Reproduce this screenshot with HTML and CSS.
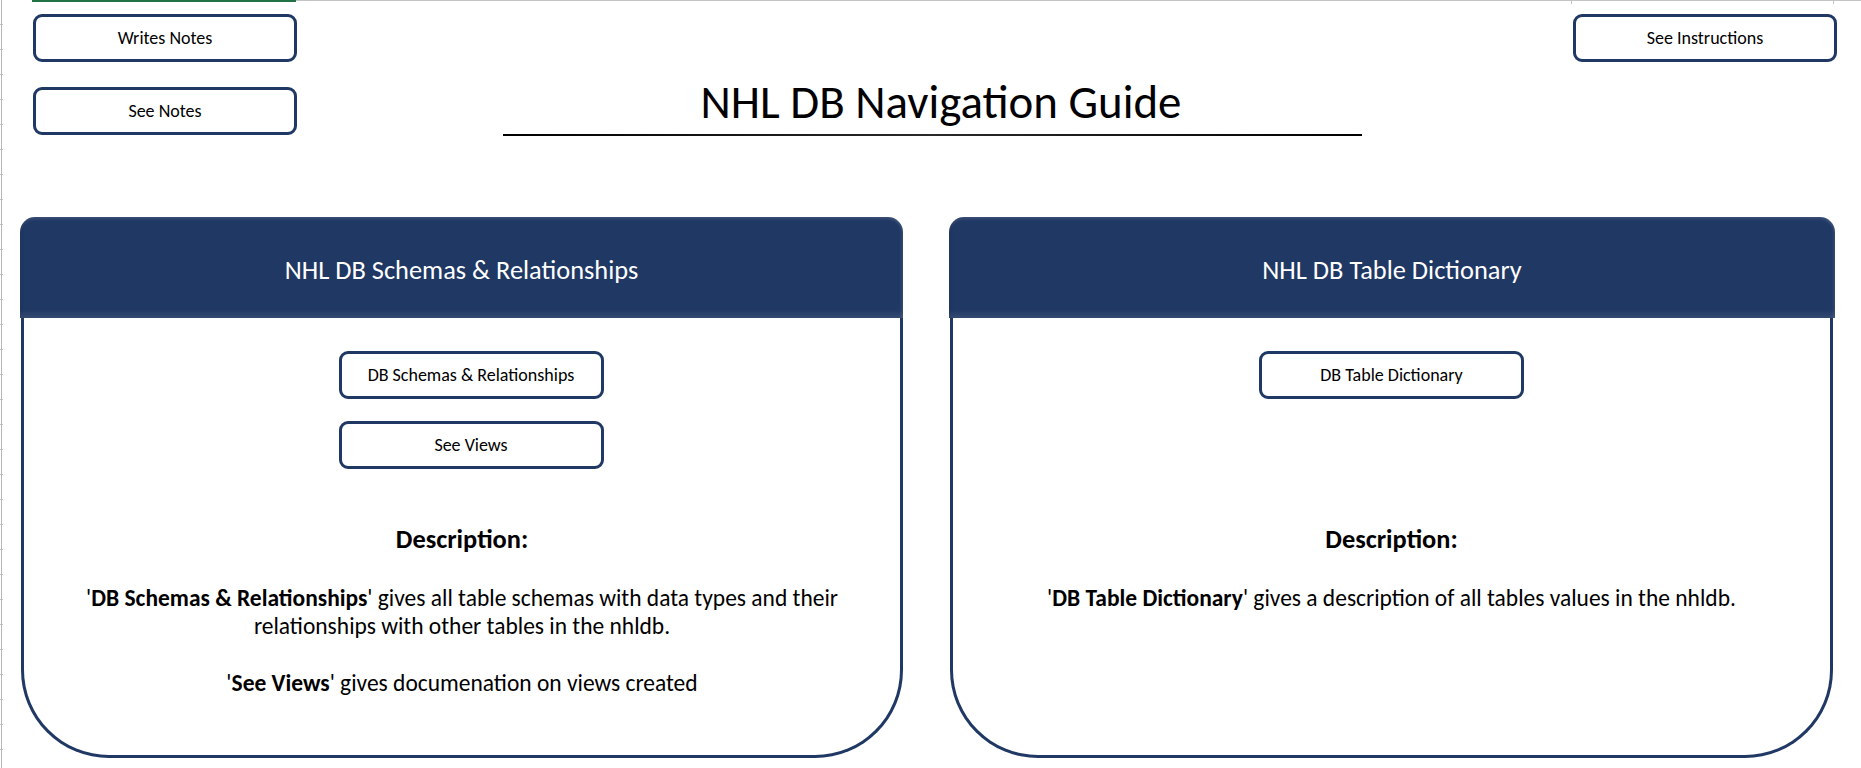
FILE: index.html
```html
<!DOCTYPE html>
<html lang="en">
<head>
<meta charset="utf-8">
<title>NHL DB Navigation Guide</title>
<link rel="stylesheet" href="styles.css">
</head>
<body>
<div class="sheet">
  <header class="top">
    <div class="nav nav-left">
      <button class="btn">Writes Notes</button>
      <button class="btn">See Notes</button>
    </div>
    <div class="title-wrap">
      <h1 class="title">NHL DB Navigation Guide</h1>
      <div class="title-rule"></div>
    </div>
    <div class="nav nav-right">
      <button class="btn">See Instructions</button>
    </div>
  </header>

  <main class="cards">
    <section class="card">
      <div class="card-head">NHL DB Schemas &amp; Relationships</div>
      <div class="card-body">
        <div class="actions actions-shift">
          <button class="btn btn-card">DB Schemas &amp; Relationships</button>
          <button class="btn btn-card">See Views</button>
        </div>
        <div class="desc">
          <h2 class="desc-title">Description:</h2>
          <p class="desc-text"><span class="line">'<b>DB Schemas &amp; Relationships</b>' gives all table schemas with data types and their</span><br><span class="line">relationships with other tables in the nhldb.</span></p>
          <p class="desc-text desc-gap">'<b>See Views</b>' gives documenation on views created</p>
        </div>
      </div>
    </section>

    <section class="card card-right">
      <div class="card-head">NHL DB Table Dictionary</div>
      <div class="card-body">
        <div class="actions">
          <button class="btn btn-card">DB Table Dictionary</button>
        </div>
        <div class="desc">
          <h2 class="desc-title">Description:</h2>
          <p class="desc-text">'<b>DB Table Dictionary</b>' gives a description of all tables values in the nhldb.</p>
        </div>
      </div>
    </section>
  </main>
</div>
</body>
</html>
```
FILE: styles.css
```css
html, body {
  margin: 0;
  padding: 0;
  background: #ffffff;
}

body {
  font-family: Calibri, Carlito, Lato, sans-serif;
  color: #000000;
}

.sheet {
  width: 1861px;
  height: 768px;
  overflow: hidden;
  box-sizing: border-box;
  background-color: #ffffff;
  background-image:
    linear-gradient(#217346, #217346),
    linear-gradient(#c4c4c4, #c4c4c4),
    linear-gradient(#c4c4c4, #c4c4c4),
    linear-gradient(#c4c4c4, #c4c4c4),
    linear-gradient(#b8b8b8, #b8b8b8),
    repeating-linear-gradient(to bottom, transparent 0 24px, #c4c4c4 24px 25px);
  background-size:
    264px 2px,
    1565px 1px,
    1px 4px,
    1px 4px,
    1px 100%,
    3px 100%;
  background-position:
    32px 0,
    296px 0,
    1571px 0,
    1833px 0,
    1px 0,
    0 0;
  background-repeat: no-repeat;
}

/* ---------- top area ---------- */
.top {
  display: grid;
  grid-template-columns: 264px 1fr 264px;
  height: 217px;
  padding: 14px 24px 0 33px;
  box-sizing: border-box;
}

.nav {
  display: flex;
  flex-direction: column;
  gap: 25px;
}

.btn {
  display: block;
  width: 264px;
  height: 48px;
  margin: 0;
  padding: 0;
  box-sizing: border-box;
  border: 3px solid #203864;
  border-radius: 9px;
  background: #ffffff;
  color: #000000;
  font-family: Calibri, Carlito, Lato, sans-serif;
  font-size: 18px;
  line-height: 42px;
  text-align: center;
  cursor: pointer;
}

.title-wrap {
  display: flex;
  flex-direction: column;
}

.title {
  margin: 60px 0 0 0;
  padding-left: 12px;
  font-size: 46.9px;
  font-weight: 400;
  line-height: 56px;
  text-align: center;
}

.title-rule {
  width: 859px;
  height: 2px;
  margin: 4px 0 0 206px;
  background: linear-gradient(to right, #000000, #2a2a2a 50%, #000000);
}

/* ---------- cards ---------- */
.cards {
  display: grid;
  grid-template-columns: 883px 886px;
  column-gap: 46px;
  padding-left: 20px;
}

.card {
  display: flex;
  flex-direction: column;
}

.card-head {
  height: 101px;
  padding-top: 5px;
  box-sizing: border-box;
  background: #203864;
  border-radius: 15px 15px 0 0;
  color: #ffffff;
  font-size: 26.4px;
  line-height: 96px;
  text-align: center;
  box-shadow:
    inset 0 3px 3px -1px rgba(255, 255, 255, 0.12),
    inset 0 -9px 6px -5px rgba(255, 255, 255, 0.10),
    inset -3px 0 3px -1px rgba(255, 255, 255, 0.08),
    inset 3px 0 3px -1px rgba(0, 0, 0, 0.08);
}

.card-body {
  height: 440px;
  margin-left: 1px;
  box-sizing: border-box;
  border: 3px solid #203864;
  border-top: none;
  border-radius: 0 0 88px 88px;
  display: flex;
  flex-direction: column;
  align-items: center;
}

.card-right .card-body {
  margin-right: 2px;
}

.actions {
  height: 205px;
  padding-top: 33px;
  box-sizing: border-box;
  display: flex;
  flex-direction: column;
  align-items: center;
  gap: 22px;
}

.actions-shift {
  padding-left: 18px;
}

.btn-card {
  width: 265px;
}

.desc {
  width: 800px;
  text-align: center;
}

.desc-title {
  margin: 0;
  font-size: 26.4px;
  font-weight: 700;
  line-height: 32px;
}

.desc-text {
  margin: 28.7px 0 0 0;
  font-size: 23.47px;
  line-height: 28.6px;
}

.desc-text b {
  font-weight: 700;
}

.desc-gap {
  margin-top: 28.6px;
}
```
